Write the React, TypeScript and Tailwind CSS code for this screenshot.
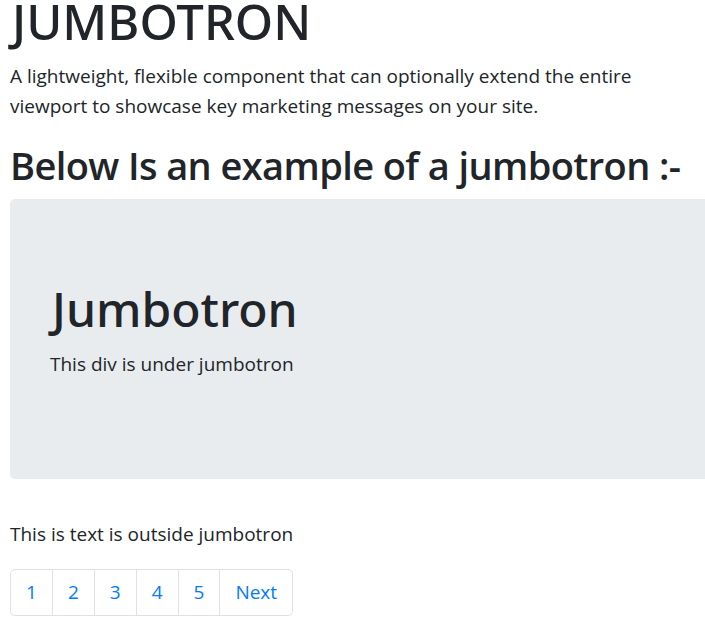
export default function App() {
  const pages = ["1", "2", "3", "4", "5", "Next"];

  return (
    <div className="w-[705px] h-[638px] overflow-hidden bg-white">
      <div className="w-[740px] pl-[10px] text-[19px] leading-[30px] text-[#212529] font-['Open_Sans',sans-serif]">
        <h1 className="mb-[18px] pl-[2px] text-[49px] leading-[43px] font-medium font-['Noto_Sans',sans-serif]">JUMBOTRON</h1>
        <p className="mb-[20px] w-[680px]">
          A lightweight, flexible component that can optionally extend the entire viewport to showcase key
          marketing messages on your site.
        </p>
        <h2 className="mb-[10px] text-[38px] leading-[48px] font-semibold tracking-[-0.6px]">
          Below Is an example of a jumbotron :-
        </h2>

        {/* jumbotron */}
        <div className="mb-[40px] rounded-[5px] bg-[#e9ecef] px-[40px] py-[80px]">
          <h1 className="mb-[10px] pl-[2px] text-[48px] leading-[60px] font-medium font-['Noto_Sans',sans-serif]">Jumbotron</h1>
          <p className="mb-[20px]">This div is under jumbotron</p>
        </div>

        <p className="mb-[20px]">This is text is outside jumbotron</p>

        <ul className="flex">
          {pages.map((p, i) => (
            <li key={p}>
              <a
                href="#"
                className={
                  "block border border-[#dee2e6] bg-white px-[15px] py-[10px] leading-[25px] text-[#007bff] " +
                  (i === 0 ? "rounded-l-[5px] " : "-ml-px ") +
                  (i === pages.length - 1 ? "rounded-r-[5px]" : "")
                }
              >
                {p}
              </a>
            </li>
          ))}
        </ul>
      </div>
    </div>
  );
}
